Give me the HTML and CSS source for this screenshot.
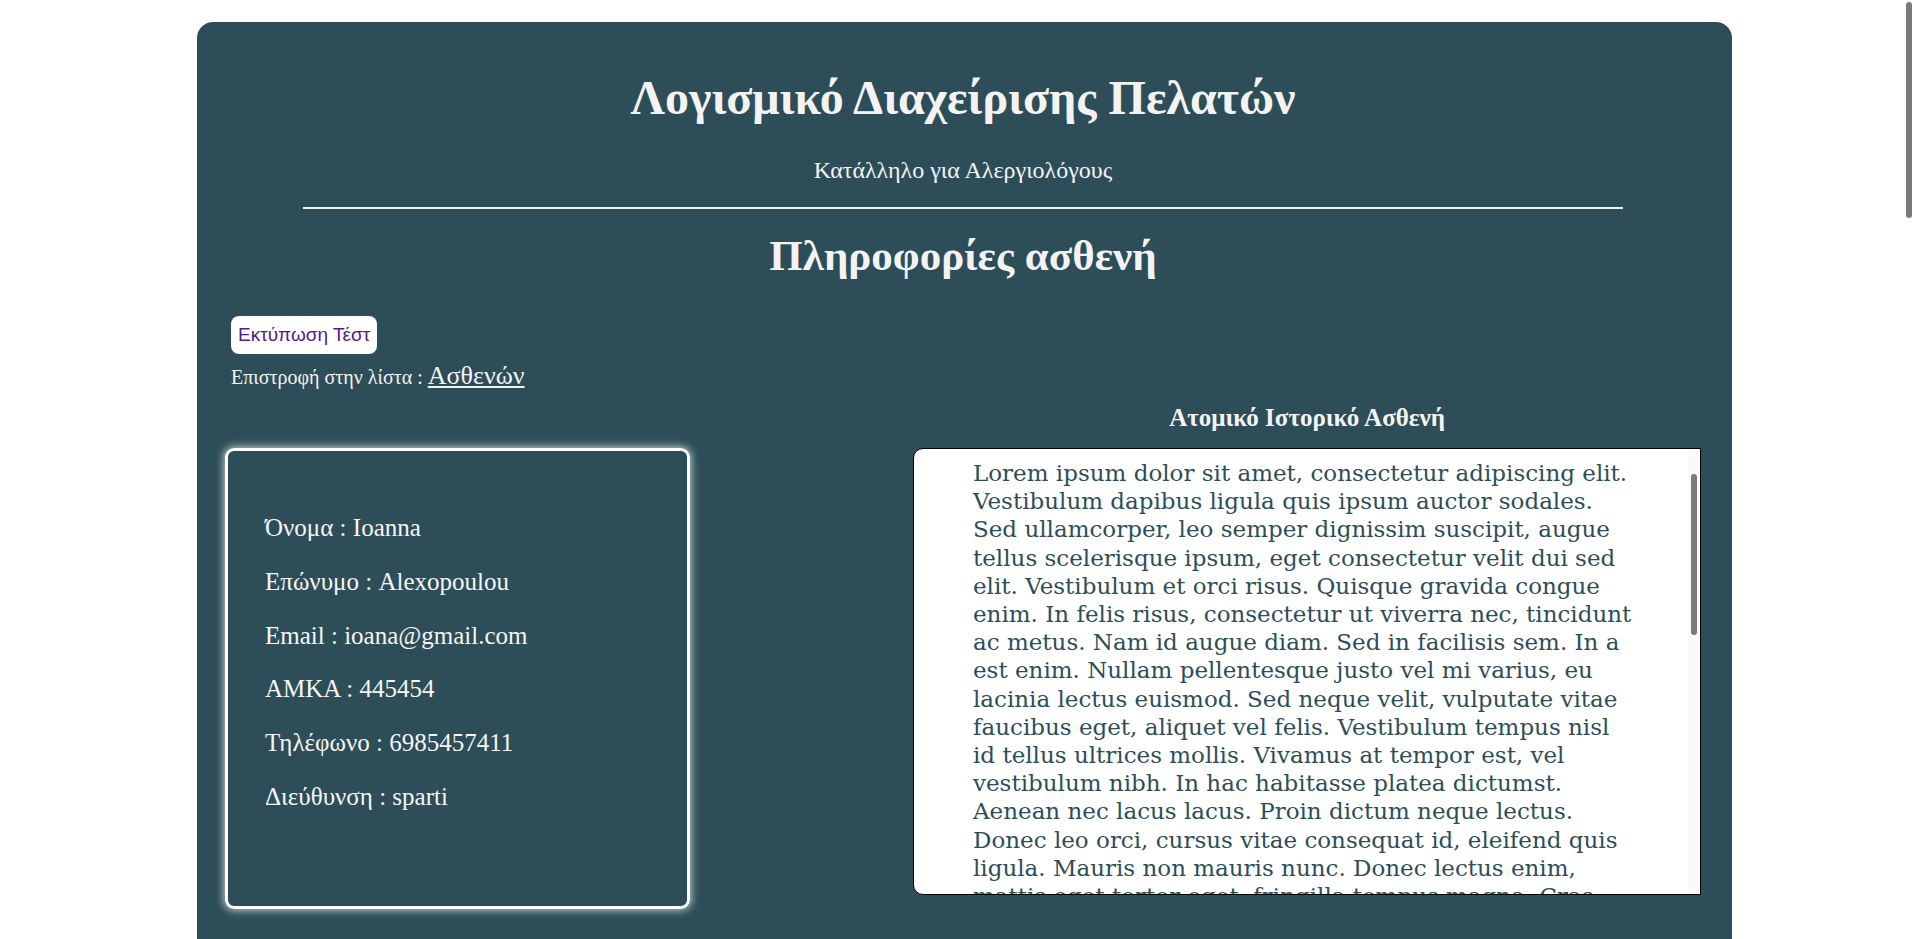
FILE: index.html
```html
<!DOCTYPE html>
<html lang="el">
<head>
<meta charset="utf-8">
<title>Πληροφορίες ασθενή</title>
<link rel="stylesheet" href="styles.css">
</head>
<body>
<main class="panel">
  <header class="masthead">
    <h1 class="title">Λογισμικό Διαχείρισης Πελατών</h1>
    <p class="subtitle">Κατάλληλο για Αλεργιολόγους</p>
    <hr class="rule">
    <h2 class="page-title">Πληροφορίες ασθενή</h2>
  </header>
  <section class="actions">
    <a class="print-btn" href="#">Εκτύπωση Τέστ</a>
    <p class="back">Επιστροφή στην λίστα : <a class="back-link" href="#">Ασθενών</a></p>
  </section>
  <section class="details">
    <h3 class="history-title">Ατομικό Ιστορικό Ασθενή</h3>
    <div class="info-card">
      <p class="info-line">Όνομα : Ioanna</p>
      <p class="info-line">Επώνυμο : Alexopoulou</p>
      <p class="info-line">Email : ioana@gmail.com</p>
      <p class="info-line">ΑΜΚΑ : 445454</p>
      <p class="info-line">Τηλέφωνο : 6985457411</p>
      <p class="info-line">Διεύθυνση : sparti</p>
    </div>
    <div class="history-wrap">
      <div class="history">
        <p class="history-text">Lorem ipsum dolor sit amet, consectetur adipiscing elit. Vestibulum dapibus ligula quis ipsum auctor sodales. Sed ullamcorper, leo semper dignissim suscipit, augue tellus scelerisque ipsum, eget consectetur velit dui sed elit. Vestibulum et orci risus. Quisque gravida congue enim. In felis risus, consectetur ut viverra nec, tincidunt ac metus. Nam id augue diam. Sed in facilisis sem. In a est enim. Nullam pellentesque justo vel mi varius, eu lacinia lectus euismod. Sed neque velit, vulputate vitae faucibus eget, aliquet vel felis. Vestibulum tempus nisl id tellus ultrices mollis. Vivamus at tempor est, vel vestibulum nibh. In hac habitasse platea dictumst. Aenean nec lacus lacus. Proin dictum neque lectus. Donec leo orci, cursus vitae consequat id, eleifend quis ligula. Mauris non mauris nunc. Donec lectus enim, mattis eget tortor eget, fringilla tempus magna. Cras pellentesque velit sit amet lorem gravida placerat. Praesent non est ac risus porttitor ornare. Etiam tincidunt, arcu non tempus aliquet, libero mauris vulputate nunc, a faucibus sapien lectus sed nisi. Integer vitae mi at nibh laoreet volutpat. Suspendisse potenti. Phasellus euismod, ligula in imperdiet consequat, eros nisl lacinia nunc, at porttitor metus lorem sit amet dolor. Nulla facilisi. Curabitur ut justo quis ipsum fermentum tempor. Morbi sed lorem eget sem vehicula iaculis. Aliquam erat volutpat. Donec vitae arcu non lacus viverra convallis eget at lorem. Fusce in enim sed nisl faucibus aliquam. Maecenas vel tortor at justo dictum varius.</p>
      </div>
      <div class="history-scroll" aria-hidden="true"><div class="history-thumb"></div></div>
    </div>
  </section>
</main>
<div class="page-thumb" aria-hidden="true"></div>
</body>
</html>
```
FILE: styles.css
```css
html, body {
  margin: 0;
  padding: 0;
  background: #ffffff;
}

body {
  font-family: "Liberation Serif", "Times New Roman", serif;
  color: #f3f3f3;
}

.page-thumb {
  position: fixed;
  top: 2px;
  right: 2px;
  width: 6px;
  height: 216px;
  background: #7a7a7a;
  border-radius: 3px;
}

.panel {
  width: 1535px;
  min-height: 1000px;
  margin: 22px 0 0 197px;
  background: #2d4e58;
  border-radius: 16px 16px 0 0;
  padding: 0 31px 40px 28px;
  box-sizing: border-box;
}

.masthead {
  text-align: center;
  padding-top: 48px;
}

.title {
  margin: 0;
  font-size: 48px;
  font-weight: bold;
  line-height: 55px;
}

.subtitle {
  margin: 31px 0 0;
  font-size: 24px;
  line-height: 28px;
}

.rule {
  width: 1320px;
  margin: 23px auto 0;
  border: 0;
  border-top: 2px solid #f0f0f0;
  height: 0;
}

.page-title {
  margin: 22px 0 0;
  font-size: 43px;
  line-height: 49px;
  font-weight: bold;
}

.actions {
  margin-top: 36px;
  padding-left: 6px;
}

.print-btn {
  display: inline-block;
  vertical-align: top;
  background: #ffffff;
  color: #551a8b;
  font-family: "Liberation Sans", Arial, sans-serif;
  font-size: 19px;
  line-height: 22px;
  padding: 8px 7px;
  border-radius: 8px;
  text-decoration: none;
}

.back {
  margin: 7px 0 0;
  font-size: 20px;
  line-height: 30px;
}

.back-link {
  color: #f3f3f3;
  font-size: 26px;
}

.details {
  display: grid;
  grid-template-columns: 465px 1fr;
  grid-template-rows: auto auto;
  column-gap: 223px;
}

.history-title {
  grid-column: 2;
  grid-row: 1;
  margin: 11px 0 0;
  text-align: center;
  font-size: 25px;
  line-height: 29px;
  font-weight: bold;
  padding-bottom: 16px;
}

.info-card {
  grid-column: 1;
  grid-row: 2;
  height: 461px;
  box-sizing: border-box;
  border: 3px solid #ffffff;
  border-radius: 9px;
  box-shadow: 0 0 8px 1px rgba(255, 255, 255, 0.75);
  padding: 38px 37px 0;
}

.info-line {
  margin: 25px 0;
  font-size: 25px;
  line-height: 28.75px;
  color: #f5f5f5;
}

.history-wrap {
  grid-column: 2;
  grid-row: 2;
  position: relative;
  height: 447px;
}

.history {
  height: 100%;
  box-sizing: border-box;
  background: #ffffff;
  border: 1px solid #000000;
  border-radius: 10px 0 0 10px;
  overflow: hidden;
  padding: 0 0 0 59px;
}

.history-text {
  margin: 10px 0;
  width: 664px;
  font-family: "DejaVu Serif", serif;
  font-size: 23px;
  line-height: 28.2px;
  color: #2d4e58;
}

.history-scroll {
  position: absolute;
  top: 1px;
  right: 1px;
  bottom: 1px;
  width: 12px;
  background: #fafafa;
}

.history-thumb {
  position: absolute;
  top: 25px;
  left: 3px;
  width: 6px;
  height: 161px;
  background: #7a7a7a;
  border-radius: 3px;
}
```
